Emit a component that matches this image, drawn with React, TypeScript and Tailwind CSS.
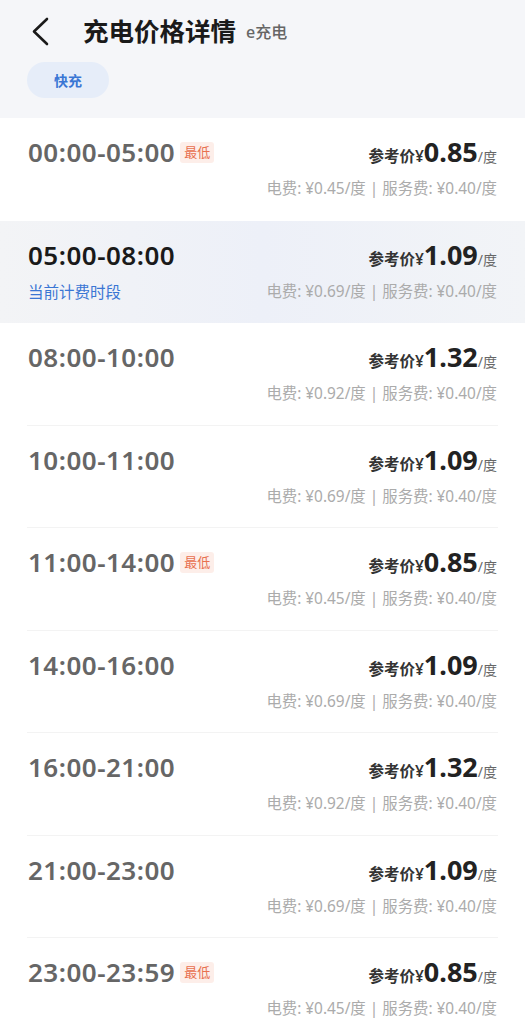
type Slot = {
  time: string;
  price: string;
  elec: string;
  lowest?: boolean;
  current?: boolean;
};

const slots: Slot[] = [
  { time: '00:00-05:00', price: '0.85', elec: '0.45', lowest: true },
  { time: '05:00-08:00', price: '1.09', elec: '0.69', current: true },
  { time: '08:00-10:00', price: '1.32', elec: '0.92' },
  { time: '10:00-11:00', price: '1.09', elec: '0.69' },
  { time: '11:00-14:00', price: '0.85', elec: '0.45', lowest: true },
  { time: '14:00-16:00', price: '1.09', elec: '0.69' },
  { time: '16:00-21:00', price: '1.32', elec: '0.92' },
  { time: '21:00-23:00', price: '1.09', elec: '0.69' },
  { time: '23:00-23:59', price: '0.85', elec: '0.45', lowest: true },
];

const font = "font-['Noto_Sans','Noto_Sans_CJK_SC',sans-serif]";

function Row({ slot, divider }: { slot: Slot; divider: boolean }) {
  return (
    <div
      className={
        'flex h-[102.5px] flex-col ' +
        (slot.current
          ? 'bg-gradient-to-r from-[#f3f4f6] via-[#edf0f8] to-[#f2f4f7]'
          : 'bg-white')
      }
    >
      <div className="mx-[28px] flex flex-1 items-start justify-between pt-[14px]">
        <div className="flex flex-col">
          <div className="flex items-center gap-[5px]">
            <span
              className={
                'text-[26px] font-semibold leading-[40px] tracking-[0.5px] ' +
                (slot.current ? 'text-[#1a1a1a]' : 'text-[#666666]')
              }
            >
              {slot.time}
            </span>
            {slot.lowest && (
              <span className="rounded-[3px] bg-[#fdeee9] px-[4px] text-[13px] leading-[21px] text-[#e8704f]">
                最低
              </span>
            )}
          </div>
          {slot.current && (
            <span className="mt-[6px] text-[15.5px] leading-[22px] text-[#3a76d4]">当前计费时段</span>
          )}
        </div>
        <div className="flex flex-col items-end">
          <div className="flex items-baseline leading-[40px]">
            <span className="text-[15.5px] font-semibold text-[#333333]">参考价¥</span>
            <span className="text-[27px] font-bold text-[#222222]">{slot.price}</span>
            <span className="text-[14px] text-[#666666]">/度</span>
          </div>
          <div className="mt-[1px] text-[15.4px] leading-[22px] text-[#ababab]">
            电费: ¥{slot.elec}/度 | 服务费: ¥0.40/度
          </div>
        </div>
      </div>
      {divider && <div className="mx-[27px] h-px bg-[#f3f3f3]" />}
    </div>
  );
}

export default function App() {
  return (
    <div className={`${font} min-h-screen w-[525px] bg-white`}>
      <div className="h-[118px] bg-[#f5f6f9]">
        <div className="flex h-[62px] items-center pl-[30px]">
          <svg width="22" height="30" viewBox="0 0 22 30" fill="none">
            <polyline
              points="17,3 4,15.5 17,28"
              stroke="#1a1a1a"
              strokeWidth="2.6"
              strokeLinecap="round"
              strokeLinejoin="round"
            />
          </svg>
          <span className="ml-[31px] text-[25.5px] font-bold text-[#1a1a1a]">充电价格详情</span>
          <span className="ml-[10px] mt-[2px] text-[16px] font-medium text-[#666666]">e充电</span>
        </div>
        <div className="pl-[27px]">
          <span className="inline-flex h-[36px] w-[82px] items-center justify-center rounded-full bg-[#e6edf9] text-[14px] font-semibold text-[#3a76d4]">
            快充
          </span>
        </div>
      </div>
      <div className="flex flex-col">
        {slots.map((s, i) => (
          <Row
            key={s.time}
            slot={s}
            divider={!s.current && i + 1 < slots.length && !slots[i + 1].current}
          />
        ))}
      </div>
    </div>
  );
}
